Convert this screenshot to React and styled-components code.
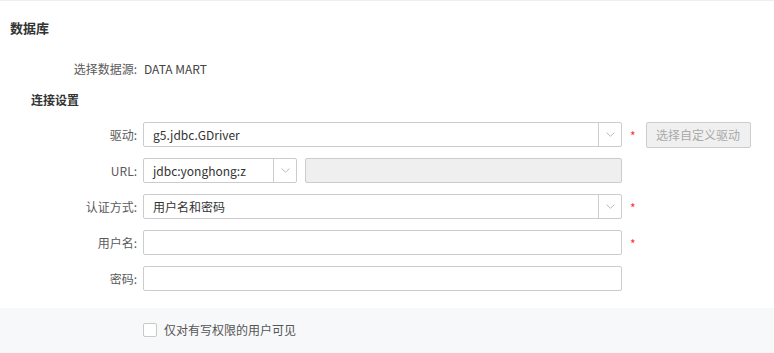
import styled, { createGlobalStyle } from 'styled-components';

const GlobalStyle = createGlobalStyle`
  body {
    margin: 0;
    background: #fff;
    font-family: "Noto Sans CJK SC", "Noto Sans", sans-serif;
    font-size: 12px;
    color: #333;
  }
`;

const rows = [
  { label: '驱动', kind: 'select', value: 'g5.jdbc.GDriver', required: true, button: '选择自定义驱动' },
  { label: 'URL', kind: 'url', value: 'jdbc:yonghong:z' },
  { label: '认证方式', kind: 'select', value: '用户名和密码', required: true },
  { label: '用户名', kind: 'input', value: '', required: true },
  { label: '密码', kind: 'input', value: '' },
];

const Chevron = () => (
  <svg width="9" height="5" viewBox="0 0 9 5">
    <path d="M0.5 0.5 L4.5 4.2 L8.5 0.5" fill="none" stroke="#bbb" strokeWidth="1" />
  </svg>
);

const App = () => {
  return (
    <Page>
      <GlobalStyle />
      <Title>数据库</Title>
      <SourceRow>
        <Label>选择数据源:</Label>
        <SourceValue>DATA MART</SourceValue>
      </SourceRow>
      <SubTitle>连接设置</SubTitle>
      <Form>
        {rows.map((r) => (
          <Row key={r.label}>
            <Label>{r.label}:</Label>
            {r.kind === 'url' ? (
              <UrlGroup>
                <Box width={154}>
                  <BoxText>{r.value}</BoxText>
                  <Arrow><Chevron /></Arrow>
                </Box>
                <Box width={317} disabled />
              </UrlGroup>
            ) : (
              <Box width={479}>
                <BoxText>{r.value}</BoxText>
                {r.kind === 'select' && <Arrow><Chevron /></Arrow>}
              </Box>
            )}
            {r.required && <Star>*</Star>}
            {r.button && <GhostButton>{r.button}</GhostButton>}
          </Row>
        ))}
      </Form>
      <Footer>
        <Check />
        <CheckText>仅对有写权限的用户可见</CheckText>
      </Footer>
    </Page>
  );
};

const Page = styled.div`
  width: 774px;
  height: 353px;
  border-top: 1px solid #eeeeee;
  box-sizing: border-box;
  display: flex;
  flex-direction: column;
  overflow: hidden;
`;

const Title = styled.div`
  padding: 18px 0 0 10px;
  line-height: 18px;
  font-size: 13px;
  font-weight: bold;
  color: #333;
`;

const SourceRow = styled.div`
  display: flex;
  align-items: center;
  margin-top: 23px;
  line-height: 18px;
`;

const Label = styled.div`
  width: 143px;
  padding-right: 6px;
  box-sizing: border-box;
  text-align: right;
  color: #5a5a5a;
  flex-shrink: 0;
`;

const SourceValue = styled.div`
  padding-left: 1px;
  color: #444;
`;

const SubTitle = styled.div`
  margin-top: 13px;
  padding-left: 31px;
  line-height: 18px;
  font-weight: bold;
  color: #333;
`;

const Form = styled.div`
  margin-top: 13px;
  display: flex;
  flex-direction: column;
  gap: 11px;
`;

const Row = styled.div`
  display: flex;
  align-items: center;
  height: 25px;
`;

const UrlGroup = styled.div`
  display: flex;
  gap: 8px;
`;

const Box = styled.div`
  width: ${(p) => p.width}px;
  height: 25px;
  box-sizing: border-box;
  border: 1px solid #cccccc;
  border-radius: 2px;
  background: ${(p) => (p.disabled ? '#efefef' : '#fff')};
  display: flex;
  align-items: center;
`;

const BoxText = styled.div`
  flex: 1;
  padding-left: 9px;
  color: #333;
  white-space: nowrap;
`;

const Arrow = styled.div`
  width: 22px;
  height: 100%;
  border-left: 1px solid #cccccc;
  display: flex;
  align-items: center;
  justify-content: center;
`;

const Star = styled.span`
  margin-left: 8px;
  color: #f33;
  font-size: 12px;
  line-height: 12px;
  padding-top: 2px;
`;

const GhostButton = styled.div`
  margin-left: 10px;
  width: 105px;
  height: 26px;
  box-sizing: border-box;
  border: 1px solid #cccccc;
  border-radius: 2px;
  background: #f0f0f0;
  color: #aaa;
  display: flex;
  align-items: center;
  justify-content: center;
`;

const Footer = styled.div`
  margin-top: 17px;
  flex: 1;
  background: #f7f8fa;
  display: flex;
  align-items: center;
  padding-left: 143px;
  padding-bottom: 2px;
`;

const Check = styled.span`
  width: 14px;
  height: 14px;
  box-sizing: border-box;
  border: 1px solid #c8c8c8;
  border-radius: 2px;
  background: #fff;
`;

const CheckText = styled.span`
  margin-left: 7px;
  color: #555;
`;

export default App;
